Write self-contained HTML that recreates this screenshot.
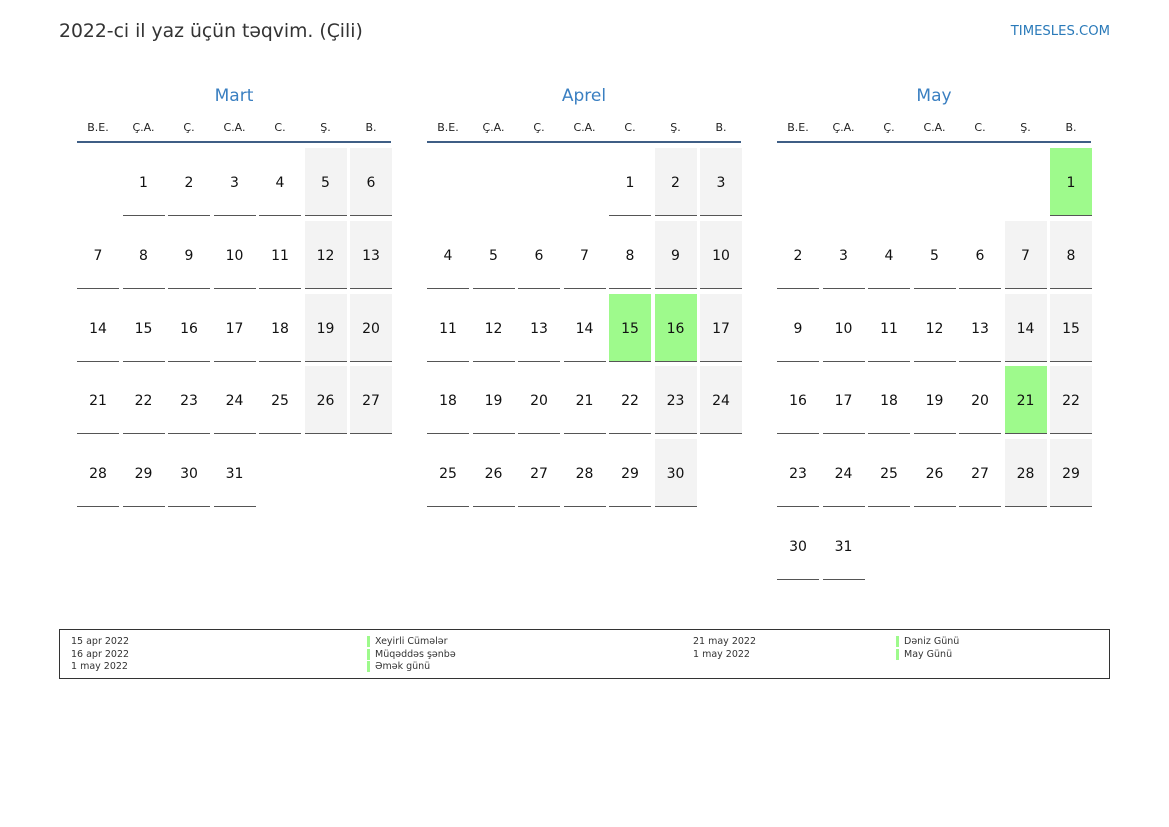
<!DOCTYPE html><html><head><meta charset="utf-8"><style>
body{margin:0;width:1169px;height:827px;background:#fff;font-family:"DejaVu Sans","Liberation Sans",sans-serif;position:relative;overflow:hidden}
.a{position:absolute}
.t{left:59px;top:21px;font-size:18.8px;color:#333}
.s{right:59px;top:24px;font-size:13.2px;color:#2a7ab9}
.m{position:absolute;top:0;width:314px;height:600px}
.mn{position:absolute;top:86px;left:0;width:314px;text-align:center;font-size:17px;color:#3a7fc1}
.dn{position:absolute;top:121px;width:42px;text-align:center;font-size:11px;color:#222}
.ln{position:absolute;top:141px;left:0;width:314px;height:2px;background:#3f5e85}
.c{position:absolute;width:42px;height:67px;border-bottom:1px solid #555;text-align:center;line-height:70px;font-size:14px;color:#111}
.g{background:#f3f3f3}.h{background:#9efa8c}
.x0{left:0}.x1{left:45.5px}.x2{left:91px}.x3{left:136.5px}.x4{left:182px}.x5{left:227.5px}.x6{left:273px}
.y0{top:148px}.y1{top:221px}.y2{top:294px}.y3{top:366px}.y4{top:439px}.y5{top:512px}
.lg{left:59px;top:629px;width:1049px;height:48px;border:1px solid #333}
.lt{position:absolute;font-size:9.5px;color:#333;line-height:12.5px}
.bar{position:absolute;width:3px;height:11px;background:#9efa8c}
</style></head><body>
<div class="a t">2022-ci il yaz üçün təqvim. (Çili)</div>
<div class="a s">TIMESLES.COM</div>

<div class="m" style="left:77px">
<div class="mn">Mart</div>
<div class="dn x0">B.E.</div><div class="dn x1">Ç.A.</div><div class="dn x2">Ç.</div><div class="dn x3">C.A.</div><div class="dn x4">C.</div><div class="dn x5">Ş.</div><div class="dn x6">B.</div>
<div class="ln"></div>
<div class="c x1 y0">1</div><div class="c x2 y0">2</div><div class="c x3 y0">3</div><div class="c x4 y0">4</div><div class="c g x5 y0">5</div><div class="c g x6 y0">6</div>
<div class="c x0 y1">7</div><div class="c x1 y1">8</div><div class="c x2 y1">9</div><div class="c x3 y1">10</div><div class="c x4 y1">11</div><div class="c g x5 y1">12</div><div class="c g x6 y1">13</div>
<div class="c x0 y2">14</div><div class="c x1 y2">15</div><div class="c x2 y2">16</div><div class="c x3 y2">17</div><div class="c x4 y2">18</div><div class="c g x5 y2">19</div><div class="c g x6 y2">20</div>
<div class="c x0 y3">21</div><div class="c x1 y3">22</div><div class="c x2 y3">23</div><div class="c x3 y3">24</div><div class="c x4 y3">25</div><div class="c g x5 y3">26</div><div class="c g x6 y3">27</div>
<div class="c x0 y4">28</div><div class="c x1 y4">29</div><div class="c x2 y4">30</div><div class="c x3 y4">31</div>
</div>

<div class="m" style="left:427px">
<div class="mn">Aprel</div>
<div class="dn x0">B.E.</div><div class="dn x1">Ç.A.</div><div class="dn x2">Ç.</div><div class="dn x3">C.A.</div><div class="dn x4">C.</div><div class="dn x5">Ş.</div><div class="dn x6">B.</div>
<div class="ln"></div>
<div class="c x4 y0">1</div><div class="c g x5 y0">2</div><div class="c g x6 y0">3</div>
<div class="c x0 y1">4</div><div class="c x1 y1">5</div><div class="c x2 y1">6</div><div class="c x3 y1">7</div><div class="c x4 y1">8</div><div class="c g x5 y1">9</div><div class="c g x6 y1">10</div>
<div class="c x0 y2">11</div><div class="c x1 y2">12</div><div class="c x2 y2">13</div><div class="c x3 y2">14</div><div class="c h x4 y2">15</div><div class="c h x5 y2">16</div><div class="c g x6 y2">17</div>
<div class="c x0 y3">18</div><div class="c x1 y3">19</div><div class="c x2 y3">20</div><div class="c x3 y3">21</div><div class="c x4 y3">22</div><div class="c g x5 y3">23</div><div class="c g x6 y3">24</div>
<div class="c x0 y4">25</div><div class="c x1 y4">26</div><div class="c x2 y4">27</div><div class="c x3 y4">28</div><div class="c x4 y4">29</div><div class="c g x5 y4">30</div>
</div>

<div class="m" style="left:777px">
<div class="mn">May</div>
<div class="dn x0">B.E.</div><div class="dn x1">Ç.A.</div><div class="dn x2">Ç.</div><div class="dn x3">C.A.</div><div class="dn x4">C.</div><div class="dn x5">Ş.</div><div class="dn x6">B.</div>
<div class="ln"></div>
<div class="c h x6 y0">1</div>
<div class="c x0 y1">2</div><div class="c x1 y1">3</div><div class="c x2 y1">4</div><div class="c x3 y1">5</div><div class="c x4 y1">6</div><div class="c g x5 y1">7</div><div class="c g x6 y1">8</div>
<div class="c x0 y2">9</div><div class="c x1 y2">10</div><div class="c x2 y2">11</div><div class="c x3 y2">12</div><div class="c x4 y2">13</div><div class="c g x5 y2">14</div><div class="c g x6 y2">15</div>
<div class="c x0 y3">16</div><div class="c x1 y3">17</div><div class="c x2 y3">18</div><div class="c x3 y3">19</div><div class="c x4 y3">20</div><div class="c h x5 y3">21</div><div class="c g x6 y3">22</div>
<div class="c x0 y4">23</div><div class="c x1 y4">24</div><div class="c x2 y4">25</div><div class="c x3 y4">26</div><div class="c x4 y4">27</div><div class="c g x5 y4">28</div><div class="c g x6 y4">29</div>
<div class="c x0 y5">30</div><div class="c x1 y5">31</div>
</div>

<div class="a lg">
<div class="lt" style="left:11px;top:6px">15 apr 2022<br>16 apr 2022<br>1 may 2022</div>
<div class="bar" style="left:307px;top:6px"></div><div class="bar" style="left:307px;top:18.5px"></div><div class="bar" style="left:307px;top:31px"></div>
<div class="lt" style="left:315px;top:6px">Xeyirli Cümələr<br>Müqəddəs şənbə<br>Əmək günü</div>
<div class="lt" style="left:633px;top:6px">21 may 2022<br>1 may 2022</div>
<div class="bar" style="left:836px;top:6px"></div><div class="bar" style="left:836px;top:18.5px"></div>
<div class="lt" style="left:844px;top:6px">Dəniz Günü<br>May Günü</div>
</div>
</body></html>
